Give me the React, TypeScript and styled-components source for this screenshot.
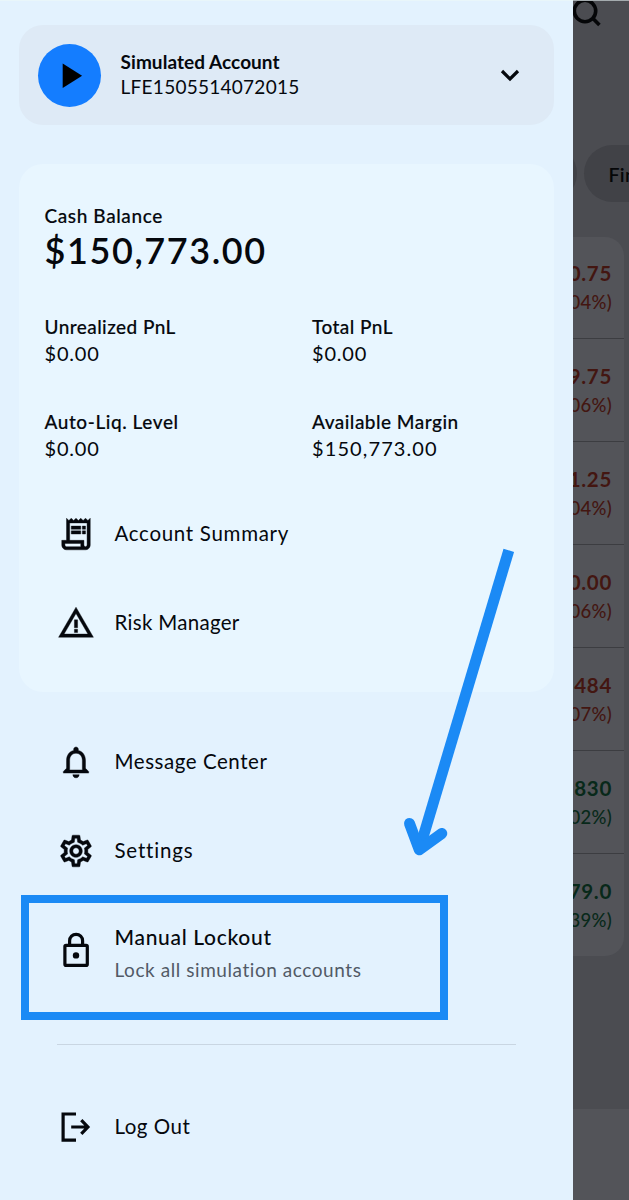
import React from 'react';
import styled, { createGlobalStyle } from 'styled-components';
import {
  MdOutlineReceiptLong,
  MdWarningAmber,
  MdNotificationsNone,
  MdOutlineSettings,
} from 'react-icons/md';

const GlobalStyle = createGlobalStyle`
  *, *::before, *::after { box-sizing: border-box; }
  body {
    margin: 0;
    background: #4b4c51;
    font-family: Lato, 'Liberation Sans', sans-serif;
    color: #05080d;
  }
`;

const Screen = styled.div`
  position: relative;
  width: 629px;
  height: 1200px;
  overflow: hidden;
`;

/* Watchlist page, dimmed behind the drawer */
const Watchlist = styled.main`
  display: flex;
  flex-direction: column;
  height: 100%;
  background: #4b4c51;
  border-top: 1px solid #a4abae;
`;

const TopBar = styled.header`
  display: flex;
  justify-content: flex-end;
  height: 144px;
  padding-right: 28px;
`;

const Chips = styled.div`
  display: flex;
  gap: 6.5px;
  padding-left: 477px;
`;

const Chip = styled.div`
  flex: none;
  width: 100px;
  height: 57px;
  padding-left: 25px;
  border-radius: 29px;
  background: #414247;
  color: #060709;
  font-size: 19.5px;
  font-weight: 600;
  line-height: 59px;
  letter-spacing: 0.3px;
`;

const Quotes = styled.section`
  height: 719px;
  margin: 35px 5px 0 20px;
  border-radius: 0 19px 19px 0;
  background: #535459;
`;

const Quote = styled.div<{ $up?: boolean }>`
  display: flex;
  flex-direction: column;
  align-items: flex-end;
  height: 103px;
  padding: 23px 12px 0 0;
  color: ${(p) => (p.$up ? '#08291a' : '#431611')};
  &:not(:last-child) {
    border-bottom: 1.5px solid #3c3d41;
  }
  &:first-child {
    height: 102px;
    padding-top: 22px;
  }
`;

const Change = styled.div`
  font-size: 20.5px;
  font-weight: 700;
  line-height: 29px;
  letter-spacing: 0.7px;
`;

const Percent = styled.div`
  font-size: 18.5px;
  font-weight: 500;
  line-height: 29px;
  letter-spacing: 0.3px;
`;

const TabBar = styled.footer`
  height: 91px;
  margin-top: auto;
  background: #535459;
`;

const Drawer = styled.aside`
  position: absolute;
  inset: 0 auto 0 0;
  width: 573.4px;
  padding-top: 24px;
  border-top: 1px solid #e9f6fa;
  background: #e3f2fe;
`;

const AccountPicker = styled.div`
  display: flex;
  align-items: center;
  width: 535px;
  height: 100px;
  margin-left: 19px;
  padding: 0 34px 0 19px;
  border-radius: 24px;
  background: #deeaf6;
`;

const Avatar = styled.div`
  display: flex;
  width: 63px;
  height: 63px;
  margin-right: 19.6px;
  border-radius: 50%;
  background: #147dff;
`;

const AccountText = styled.div`
  flex: 1;
  margin-top: -2px;
`;

const AccountName = styled.div`
  font-size: 19px;
  font-weight: 700;
  line-height: 25px;
  letter-spacing: 0.05px;
`;

const AccountId = styled.div`
  font-size: 19px;
  line-height: 25px;
  letter-spacing: 0.26px;
`;

const BalanceCard = styled.section`
  width: 535px;
  height: 528px;
  margin: 39px 0 0 19px;
  padding: 38.5px 0 0 25.5px;
  border-radius: 24px;
  background: #e8f6ff;
`;

const Label = styled.div<{ $track: number }>`
  font-size: 19px;
  font-weight: 500;
  line-height: 26px;
  letter-spacing: ${(p) => p.$track}px;
  -webkit-text-stroke: 0.15px currentColor;
`;

const Amount = styled.div<{ $track: number }>`
  font-size: 20px;
  line-height: 27px;
  letter-spacing: ${(p) => p.$track}px;
`;

const Balance = styled.div`
  font-size: 36px;
  font-weight: 600;
  line-height: 43px;
  letter-spacing: 1.6px;
`;

const Stats = styled.div`
  display: grid;
  grid-template-columns: 267.5px 1fr;
  row-gap: 42px;
  margin-top: 42.2px;
`;

const CardMenu = styled.nav`
  margin: 27.8px 0 0 -25.5px;
`;

const Menu = styled.nav`
  margin: 26px 0 0 19px;
`;

const MenuItem = styled.div`
  display: flex;
  align-items: center;
  gap: 19.5px;
  height: 88.7px;
  padding-left: 38px;
  svg {
    flex: none;
  }
`;

const GlyphIcon = styled.span`
  display: flex;
  flex: none;
  font-size: 38px;
  path:not([fill='none']) {
    stroke: currentColor;
    stroke-width: 0.25px;
  }
  path[fill='none'] {
    stroke: none;
  }
`;

const MenuText = styled.span<{ $track: number }>`
  margin-top: -2px;
  font-size: 20.5px;
  line-height: 30px;
  letter-spacing: ${(p) => p.$track}px;
`;

const Highlight = styled.div`
  display: flex;
  gap: 19.5px;
  width: 427px;
  height: 125px;
  margin-left: 21px;
  padding: 17.6px 0 0 28px;
  border: 8px solid #1b8af5;
  svg {
    flex: none;
    margin-top: 10.5px;
  }
`;

const LockTitle = styled.div`
  font-size: 21px;
  font-weight: 500;
  line-height: 32px;
  letter-spacing: 0.68px;
`;

const LockNote = styled.div`
  color: #525a66;
  font-size: 19px;
  line-height: 34px;
  letter-spacing: 0.56px;
`;

const Divider = styled.hr`
  width: 459px;
  height: 1px;
  margin: 24px 0 37px 57px;
  border: 0;
  background: #c9d6e2;
`;

const LogoutRow = styled(MenuItem)`
  margin-left: 19px;
`;

const Arrow = styled.svg`
  position: absolute;
  left: 390px;
  top: 540px;
`;

const quotes = [
  { change: '-20.75', percent: '(-0.04%)' },
  { change: '-9.75', percent: '(-0.06%)' },
  { change: '-1.25', percent: '(-0.04%)' },
  { change: '-20.00', percent: '(-0.06%)' },
  { change: '-0.484', percent: '(-0.07%)' },
  { change: '+0.830', percent: '(+0.02%)' },
  { change: '+79.0', percent: '(+0.39%)' },
].map((q) => ({ ...q, up: q.change.startsWith('+') }));

const stats = [
  { label: 'Unrealized PnL', lt: 0.43, value: '$0.00', vt: 0.8 },
  { label: 'Total PnL', lt: 0.45, value: '$0.00', vt: 0.8 },
  { label: 'Auto-Liq. Level', lt: 0.57, value: '$0.00', vt: 0.8 },
  { label: 'Available Margin', lt: 0.48, value: '$150,773.00', vt: 1.1 },
];

export default function App() {
  return (
    <Screen>
      <GlobalStyle />
      <Watchlist>
        <TopBar>
          <svg width="30" height="28" viewBox="571 1 30 28" fill="none" stroke="#050608" strokeWidth="3.6">
            <circle cx="585" cy="11" r="10.7" />
            <path d="M592.5 18 599.4 25" />
          </svg>
        </TopBar>
        <Chips>
          <Chip />
          <Chip>Fin</Chip>
        </Chips>
        <Quotes>
          {quotes.map((q, i) => (
            <Quote key={i} $up={q.up}>
              <Change>{q.change}</Change>
              <Percent>{q.percent}</Percent>
            </Quote>
          ))}
        </Quotes>
        <TabBar />
      </Watchlist>

      <Drawer>
        <AccountPicker>
          <Avatar>
            <svg width="63" height="63" viewBox="0 0 63 63">
              <path d="M24.7 19.5v24.6l19.4-12.3z" fill="#000" />
            </svg>
          </Avatar>
          <AccountText>
            <AccountName>Simulated Account</AccountName>
            <AccountId>LFE1505514072015</AccountId>
          </AccountText>
          <svg width="20" height="14" viewBox="0 0 20 14" fill="none" stroke="#05080d" strokeWidth="3.2">
            <path d="m2 3 8 8 8-8" />
          </svg>
        </AccountPicker>

        <BalanceCard>
          <Label $track={0.6}>Cash Balance</Label>
          <Balance>$150,773.00</Balance>
          <Stats>
            {stats.map((s) => (
              <div key={s.label}>
                <Label $track={s.lt}>{s.label}</Label>
                <Amount $track={s.vt}>{s.value}</Amount>
              </div>
            ))}
          </Stats>
          <CardMenu>
            <MenuItem>
              <GlyphIcon><MdOutlineReceiptLong /></GlyphIcon>
              <MenuText $track={0.7}>Account Summary</MenuText>
            </MenuItem>
            <MenuItem>
              <GlyphIcon><MdWarningAmber /></GlyphIcon>
              <MenuText $track={0.3}>Risk Manager</MenuText>
            </MenuItem>
          </CardMenu>
        </BalanceCard>

        <Menu>
          <MenuItem>
            <GlyphIcon><MdNotificationsNone /></GlyphIcon>
            <MenuText $track={0.55}>Message Center</MenuText>
          </MenuItem>
          <MenuItem>
            <GlyphIcon><MdOutlineSettings /></GlyphIcon>
            <MenuText $track={0.8}>Settings</MenuText>
          </MenuItem>
        </Menu>

        <Highlight>
          <svg width="38" height="38" viewBox="0 0 38 38" fill="none" stroke="#05080d" strokeWidth="3.2">
            <rect x="7.9" y="14.4" width="22.4" height="20" rx="1.2" />
            <path d="M12.6 14V9.8a6.5 6.5 0 0 1 13 0V14" />
            <circle cx="19" cy="24.4" r="3.2" fill="#05080d" stroke="none" />
          </svg>
          <div>
            <LockTitle>Manual Lockout</LockTitle>
            <LockNote>Lock all simulation accounts</LockNote>
          </div>
        </Highlight>

        <Divider />

        <LogoutRow>
          <svg width="38" height="38" viewBox="0 0 38 38" fill="none" stroke="#05080d" strokeWidth="3.2">
            <path d="M19 6H6.1v26.2H19M14.2 19h16.5M24.3 12.2l6.6 6.8-6.6 6.8" />
          </svg>
          <MenuText $track={0.5}>Log Out</MenuText>
        </LogoutRow>
      </Drawer>

      <Arrow width="130" height="330" viewBox="390 540 130 330" fill="none" stroke="#1b8af5" strokeWidth="11">
        <path d="M508.8 550.3 419.8 848" />
        <path d="M409.5 823.5 419.3 849.8 441.8 833.5" strokeLinecap="round" strokeLinejoin="round" />
      </Arrow>
    </Screen>
  );
}
